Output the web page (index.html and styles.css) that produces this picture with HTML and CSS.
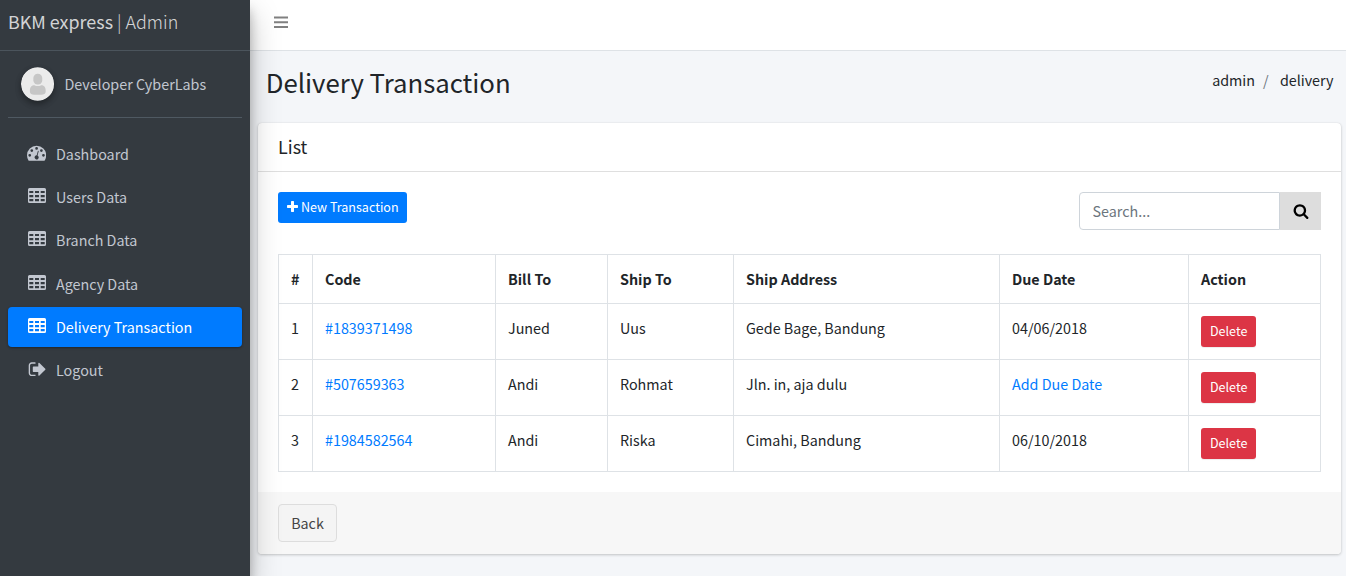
FILE: index.html
```html
<!DOCTYPE html>
<html lang="en">
<head>
<meta charset="utf-8">
<title>Delivery Transaction</title>
<link rel="stylesheet" href="styles.css">
</head>
<body>
<svg class="defs" aria-hidden="true">
  <symbol id="table" viewBox="0 0 18 15"><path fill-rule="evenodd" d="M1.500 0H16.500Q18 0 18 1.500V13.500Q18 15 16.500 15H1.500Q0 15 0 13.500V1.500Q0 0 1.500 0ZM1.300 3V5H5.300V3ZM7 3V5H11V3ZM12.700 3V5H16.700V3ZM1.300 7V9.200H5.300V7ZM7 7V9.200H11V7ZM12.700 7V9.200H16.700V7ZM1.300 11V13.300H5.300V11ZM7 11V13.300H11V11ZM12.700 11V13.300H16.700V11Z"/></symbol>
</svg>
<div class="wrapper">
  <aside class="sidebar">
    <a class="brand"><span class="brand-name">BKM express</span><span class="brand-sub">| Admin</span></a>
    <div class="user">
      <svg class="avatar" viewBox="0 0 34 34"><circle cx="17" cy="17" r="17" fill="#ebebeb"/><rect x="12.5" y="6.5" width="9" height="11" rx="4.4" fill="#c6c6c6"/><path d="M9 24C9 20 11 18.3 13.5 18.3Q17 20 20.500 18.300C23 18.300 25 20 25 24C25 27.500 23 28 17 28S9 27.500 9 24Z" fill="#c6c6c6"/></svg>
      <span class="user-name">Developer CyberLabs</span>
    </div>
    <nav class="menu">
      <a class="item"><svg class="icon dash" viewBox="0 0 1792 1792"><path fill-rule="evenodd" d="M0 1152A896 896 0 0 1 1792 1152Q1792 1413 1651 1635Q1632 1664 1597 1664H195Q160 1664 141 1635Q0 1414 0 1152ZM128 1152a128 128 0 1 0 256 0a128 128 0 1 0-256 0ZM320 704a128 128 0 1 0 256 0a128 128 0 1 0-256 0ZM768 512a128 128 0 1 0 256 0a128 128 0 1 0-256 0ZM1216 704a128 128 0 1 0 256 0a128 128 0 1 0-256 0ZM1408 1152a128 128 0 1 0 256 0a128 128 0 1 0-256 0ZM908 1153L1009 771Q1024 725 1056 735Q1094 748 1087 792L986 1173A192 192 0 1 1 908 1153Z"/></svg><span>Dashboard</span></a>
      <a class="item"><svg class="icon grid"><use href="#table"/></svg><span>Users Data</span></a>
      <a class="item"><svg class="icon grid"><use href="#table"/></svg><span>Branch Data</span></a>
      <a class="item"><svg class="icon grid"><use href="#table"/></svg><span>Agency Data</span></a>
      <a class="item active"><svg class="icon grid"><use href="#table"/></svg><span>Delivery Transaction</span></a>
      <a class="item"><svg class="icon exit" viewBox="-64 128 1792 1792"><path d="M640 1440q0 4 1 20t.5 26.500-3 23.500-10 19.500-20.500 6.500h-320q-119 0-203.500-84.500t-84.500-203.500v-704q0-119 84.500-203.500t203.500-84.500h320q13 0 22.500 9.500t9.500 22.500q0 4 1 20t.5 26.500-3 23.500-10 19.500-20.500 6.500h-320q-66 0-113 47t-47 113v704q0 66 47 113t113 47h312l11.500 1 11.500 3 8 5.500 7 9 2 13.500zm928-544q0 26-19 45l-544 544q-19 19-45 19t-45-19-19-45v-288h-448q-26 0-45-19t-19-45v-384q0-26 19-45t45-19h448v-288q0-26 19-45t45-19 45 19l544 544q19 19 19 45z"/></svg><span>Logout</span></a>
    </nav>
  </aside>
  <div class="main">
    <header class="topbar"><svg class="bars" viewBox="0 0 14 12"><path d="M0 .5h14v2H0zM0 5.200h14v2H0zM0 10h14v2H0z"/></svg></header>
    <div class="page-head">
      <h1 class="title">Delivery Transaction</h1>
      <div class="crumbs"><span>admin</span><span class="slash">/</span><span>delivery</span></div>
    </div>
    <section class="card">
      <div class="card-head">List</div>
      <div class="card-body">
        <div class="tools">
          <button class="btn-sm primary"><svg class="plus" viewBox="192 128 1408 1408"><path d="M1600 736v192q0 40-28 68t-68 28h-416v416q0 40-28 68t-68 28h-192q-40 0-68-28t-28-68v-416h-416q-40 0-68-28t-28-68v-192q0-40 28-68t68-28h416v-416q0-40 28-68t68-28h192q40 0 68 28t28 68v416h416q40 0 68 28t28 68z"/></svg><span>New Transaction</span></button>
          <div class="search"><input class="search-input" placeholder="Search..."><button class="search-btn"><svg class="search-icon" viewBox="0 0 1792 1792"><path d="M1216 832q0-185-131.500-316.500t-316.500-131.500-316.500 131.500-131.500 316.500 131.500 316.500 316.500 131.500 316.500-131.500 131.500-316.500zm512 832q0 52-38 90t-90 38q-54 0-90-38l-343-342q-179 124-399 124-143 0-273.500-55.500t-225-150-150-225-55.500-273.500 55.500-273.500 150-225 225-150 273.500-55.500 273.500 55.500 225 150 150 225 55.500 273.500q0 220-124 399l343 343q37 37 37 90z"/></svg></button></div>
        </div>
        <table class="table">
          <colgroup><col class="c-num"><col class="c-code"><col class="c-bill"><col class="c-ship"><col class="c-addr"><col class="c-due"><col class="c-act"></colgroup>
          <thead><tr><th>#</th><th>Code</th><th>Bill To</th><th>Ship To</th><th>Ship Address</th><th>Due Date</th><th>Action</th></tr></thead>
          <tbody>
            <tr><td>1</td><td><a class="link">#1839371498</a></td><td>Juned</td><td>Uus</td><td>Gede Bage, Bandung</td><td>04/06/2018</td><td><button class="btn-sm danger">Delete</button></td></tr>
            <tr><td>2</td><td><a class="link">#507659363</a></td><td>Andi</td><td>Rohmat</td><td>Jln. in, aja dulu</td><td><a class="link">Add Due Date</a></td><td><button class="btn-sm danger">Delete</button></td></tr>
            <tr><td>3</td><td><a class="link">#1984582564</a></td><td>Andi</td><td>Riska</td><td>Cimahi, Bandung</td><td>06/10/2018</td><td><button class="btn-sm danger">Delete</button></td></tr>
          </tbody>
        </table>
      </div>
      <div class="card-foot"><button class="back">Back</button></div>
    </section>
  </div>
</div>
</body>
</html>
```
FILE: styles.css
```css
* { box-sizing: border-box; }
body {
  margin: 0;
  overflow: hidden;
  background: #f4f6f9;
  color: #212529;
  font: 14.33px/24px "Noto Sans CJK SC", "Noto Sans", sans-serif;
}
button, input { font-family: inherit; margin: 0; }
svg { fill: currentColor; flex: none; }
.defs { display: none; }
.wrapper { display: flex; height: 576px; }

.sidebar {
  width: 250px;
  flex: none;
  z-index: 1;
  background: #343a40;
  color: #c2c7d0;
  box-shadow: 0 14px 28px rgba(0,0,0,.25), 0 10px 10px rgba(0,0,0,.22);
}
.brand {
  display: flex;
  gap: 4px;
  height: 51px;
  padding: 6px 8px 0;
  border-bottom: 1px solid #4b545c;
  font-size: 17.9px;
  line-height: 30px;
  color: rgba(255,255,255,.8);
}
.brand-sub { font-weight: 300; }
.user {
  display: flex;
  height: 67px;
  margin: 0 8px;
  padding: 16px 0 0 12.800px;
  border-bottom: 1px solid #4f5962;
}
.avatar {
  width: 33.600px;
  height: 34px;
  border-radius: 50%;
  box-shadow: 0 3px 6px rgba(0,0,0,.16), 0 3px 6px rgba(0,0,0,.23);
}
.user-name { padding: 5px 0 0 10px; }
.menu {
  display: flex;
  flex-direction: column;
  gap: 3.200px;
  padding: 16px 8px 0;
}
.item {
  display: flex;
  height: 40px;
  padding: 8px 16px 8px 19px;
  border-radius: 4px;
}
.item span { padding-left: 9.800px; }
.icon { width: 19.200px; height: 19.200px; margin-top: 1px; }
.dash { margin-top: 1.300px; }
.grid { width: 18px; height: 15px; margin: 3px .2px 0 1px; }
.exit { margin: 3.500px -.8px 0 .8px; }
.active {
  color: #fff;
  background: #007bff;
  box-shadow: 0 1px 3px rgba(0,0,0,.12), 0 1px 2px rgba(0,0,0,.24);
}

.main { flex: 1; min-width: 0; }
.topbar {
  height: 51px;
  padding: 16px 24px;
  background: #fff;
  border-bottom: 1px solid #dee2e6;
  line-height: 0;
}
.bars { width: 14px; height: 12px; color: #808080; }
.page-head {
  display: flex;
  justify-content: space-between;
  height: 72px;
  padding: 13px 12.500px 0 15.700px;
}
.title { margin: 0; font-size: 25.750px; line-height: 35px; font-weight: 400; }
.crumbs { display: flex; padding-top: 4px; }
.slash { padding: 0 11.200px 0 8px; color: #6c757d; }

.card {
  margin: 0 5px 0 8px;
  border-radius: 4px;
  background: #fff;
  overflow: hidden;
  box-shadow: 0 0 1px rgba(0,0,0,.125), 0 1px 3px rgba(0,0,0,.2);
}
.card-head {
  height: 49px;
  padding: 11px 20px;
  border-bottom: 1px solid rgba(0,0,0,.125);
  font-size: 17.900px;
}
.card-body { height: 320px; padding: 20px; }
.tools {
  display: flex;
  justify-content: space-between;
  align-items: flex-start;
  height: 62px;
}
.btn-sm {
  display: flex;
  align-items: center;
  height: 31px;
  padding: 0 9px 2px;
  border: 0;
  border-radius: 3px;
  color: #fff;
  font-size: 12.540px;
  line-height: 21px;
}
.primary { width: 129px; background: #007bff; gap: 3px; white-space: nowrap; }
.danger { background: #dc3545; box-shadow: 0 1px 1px rgba(0,0,0,.075); }
.plus { width: 11px; height: 11px; }
.search { display: flex; width: 242px; height: 38px; }
.search-input {
  width: 201px;
  padding: 0 12.500px 2px;
  border: 1px solid #ced4da;
  border-radius: 4px 0 0 4px;
  font-size: 14.330px;
}
.search-input::placeholder { color: #6c757d; opacity: 1; }
.search-btn {
  display: flex;
  align-items: center;
  justify-content: center;
  width: 41px;
  padding: 0;
  border: 0;
  background: #ddd;
  color: #000;
}
.search-icon { width: 16px; height: 16px; }

.table { width: 1043px; table-layout: fixed; border-collapse: collapse; }
.table th, .table td {
  height: 56px;
  padding: 12px;
  border: 1px solid #dee2e6;
  text-align: left;
  vertical-align: top;
}
.table th { height: 49px; font-weight: 700; }
.c-num { width: 34px; }
.c-code { width: 183px; }
.c-bill { width: 112px; }
.c-ship { width: 126px; }
.c-addr { width: 266px; }
.c-due { width: 189px; }
.c-act { width: 132px; }
.link { color: #007bff; }
.card-foot { height: 62px; padding: 12px 20px; background: #f7f7f7; }
.back {
  width: 59px;
  height: 38px;
  padding: 0 0 2px;
  border: 1px solid #ddd;
  border-radius: 4px;
  background: #f4f4f4;
  color: #444;
  font-size: 14.330px;
}
```
